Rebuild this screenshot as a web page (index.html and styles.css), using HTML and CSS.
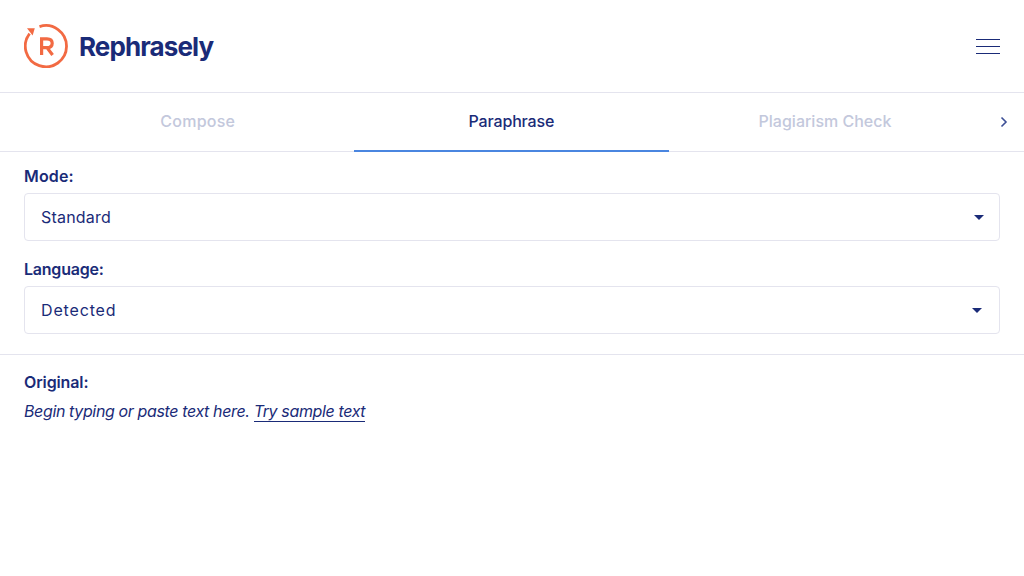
FILE: index.html
```html
<!DOCTYPE html>
<html lang="en">
<head>
<meta charset="utf-8">
<title>Rephrasely</title>
<link rel="stylesheet" href="styles.css">
</head>
<body>
<header class="header">
  <div class="brand">
    <svg class="logo" width="44" height="44" viewBox="0 0 44 44" fill="none">
      <path d="M15.5 2.6A20.6 20.6 0 1 1 5.6 9.6" stroke="#f26a43" stroke-width="2.8"/>
      <path d="M3 4.2H10.8L8.6 11.6Z" fill="#f26a43"/>
      <path d="M17.6 31V14.8H23C26.2 14.8 28.2 16.4 28.2 19.2C28.2 22 26.2 23.6 23 23.6H17.6M23 23.6L28.6 31" stroke="#f26a43" stroke-width="3.2"/>
    </svg>
    <span class="brand-name">Rephrasely</span>
  </div>
  <div class="menu"><span></span><span></span><span></span></div>
</header>
<nav class="tabs">
  <div class="tab first">Compose</div>
  <div class="tab active">Paraphrase</div>
  <div class="tab last">Plagiarism Check</div>
  <svg class="chev" width="8" height="12" viewBox="0 0 8 12" fill="none"><path d="M1.5 1.5L6 6L1.5 10.5" stroke="#3d4f96" stroke-width="1.6"/></svg>
</nav>
<section class="settings">
  <div class="label mode-label">Mode:</div>
  <div class="select"><span>Standard</span><i class="caret"></i></div>
  <div class="label lang-label">Language:</div>
  <div class="select lang"><span>Detected</span><i class="caret"></i></div>
</section>
<section class="original">
  <div class="label orig-label">Original:</div>
  <p class="hint">Begin typing or paste text here. <a class="sample">Try sample text</a></p>
</section>
</body>
</html>
```
FILE: styles.css
```css
* { box-sizing: border-box; }
html, body { margin: 0; padding: 0; background: #fff; }
body { font-family: Inter, "Liberation Sans", sans-serif; color: #1a2b78; height: 576px; overflow: hidden; }
.header { height: 93px; border-bottom: 1px solid #e4e4ee; padding: 0 24px; display: flex; align-items: center; justify-content: space-between; }
.brand { display: flex; align-items: center; gap: 11px; }
.logo { display: block; }
.brand-name { font-size: 26px; font-weight: 700; letter-spacing: -0.9px; color: #1a2b78; line-height: 30px; position: relative; top: 1px; }
.menu { width: 24px; display: flex; flex-direction: column; gap: 6px; }
.menu span { display: block; height: 1px; background: #1a2b78; }
.tabs { height: 59px; border-bottom: 1px solid #e4e4ee; padding-left: 39.5px; display: flex; align-items: stretch; }
.tab { width: 314.6px; display: flex; align-items: center; justify-content: center; font-size: 16px; font-weight: 500; color: #c3c8dc; margin-bottom: -1px; padding-bottom: 3px; }
.tab.first { letter-spacing: 0.25px; padding-left: 2px; }
.tab.last { padding-right: 2px; }
.tab.active { color: #1a2b78; border-bottom: 2px solid #4a86e0; padding-bottom: 1px; letter-spacing: -0.15px; }
.chev { align-self: center; margin-left: 16.5px; }
.settings { padding: 14px 24px 20px; border-bottom: 1px solid #e4e4ee; }
.label { font-size: 16px; font-weight: 600; line-height: 20px; height: 20px; color: #1a2b78; }
.mode-label { letter-spacing: 0.15px; }
.select { height: 48px; margin-top: 7px; border: 1px solid #e4e4ee; border-radius: 4px; padding: 0 15px 0 16px; display: flex; align-items: center; justify-content: space-between; font-size: 16px; letter-spacing: 0.2px; }
.lang-label { margin-top: 18px; letter-spacing: -0.22px; }
.orig-label { letter-spacing: -0.12px; }
.lang { margin-top: 7px; padding-right: 17px; letter-spacing: 0.85px; }
.caret { width: 0; height: 0; border-left: 5px solid transparent; border-right: 5px solid transparent; border-top: 5px solid #1a2b78; }
.original { padding: 17px 24px 0; }
.hint { margin: 8px 0 0; font-size: 16px; font-style: italic; line-height: 22px; color: #1a2b78; letter-spacing: -0.37px; }
.sample { border-bottom: 1px solid #1a2b78; }
```
